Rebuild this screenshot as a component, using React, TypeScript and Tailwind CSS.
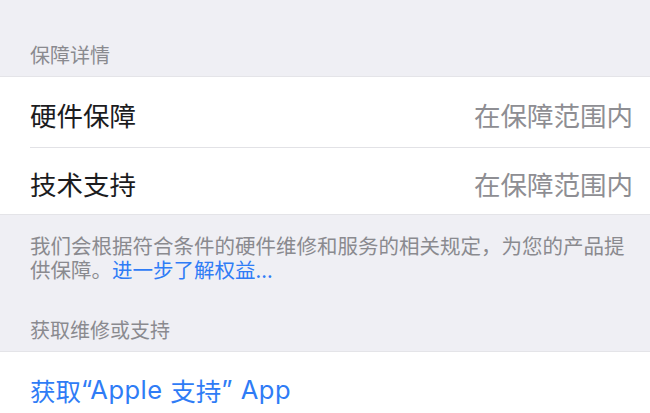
import React from "react";

const font = { fontFamily: '"Noto Sans CJK SC", "Noto Sans", sans-serif' };
const latin = { fontFamily: 'Inter, "Noto Sans CJK SC", sans-serif' };

export default function App() {
  return (
    <div className="w-[650px] h-[413px] overflow-hidden bg-[#efeff4]" style={font}>
      {/* section header */}
      <div className="pt-[41px] pb-[7px] px-[30px] text-[20px] leading-[28px] text-[#8a8a8f]">
        保障详情
      </div>
      <div className="bg-white border-t border-[#e4e4e8]">
        <div className="h-[70px] pt-[6px] pl-[30px] flex items-center">
          <div className="flex-1 flex items-center justify-between pr-[17px] text-[26.5px] leading-[34px]">
            <span className="text-[#1c1c1e]">硬件保障</span>
            <span className="text-[#8e8e93]">在保障范围内</span>
          </div>
        </div>
        <div className="ml-[30px] h-px bg-[#e2e2e6]" />
        <div className="h-[66px] pt-[6px] pl-[30px] flex items-center">
          <div className="flex-1 flex items-center justify-between pr-[17px] text-[26.5px] leading-[34px]">
            <span className="text-[#1c1c1e]">技术支持</span>
            <span className="text-[#8e8e93]">在保障范围内</span>
          </div>
        </div>
      </div>
      <div className="border-t border-[#e4e4e8] pt-[18px] pl-[30px] pr-[20px] text-[20.5px] leading-[24px] text-[#8a8a8f]">
        我们会根据符合条件的硬件维修和服务的相关规定，为您的产品提供保障。
        <span className="text-[#2f7cf6]">进一步了解权益...</span>
      </div>
      <div className="pt-[35px] pb-[7px] px-[30px] text-[20px] leading-[28px] text-[#8a8a8f]">
        获取维修或支持
      </div>
      <div className="bg-white border-t border-[#e4e4e8] h-[80px] pt-[6px] pl-[30px]">
        <div className="h-[64px] flex items-center text-[25.5px] leading-[34px] text-[#2f7cf6] whitespace-pre">
          <span>获取</span>
          <span style={latin} className="tracking-[0.5px]">{"“Apple "}</span>
          <span>支持</span>
          <span style={latin} className="tracking-[0.5px]">{"” App"}</span>
        </div>
      </div>
    </div>
  );
}
